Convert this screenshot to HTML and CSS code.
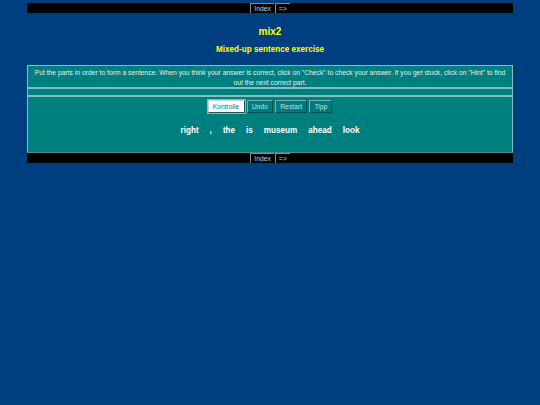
FILE: index.html
```html
<!DOCTYPE html>
<html lang="en">
<head>
    <meta charset="UTF-8">
    <title>mix2</title>
    <link rel="stylesheet" href="styles.css">
</head>
<body>
    <div class="nav-bar nav-top">
        <span class="nav-button">Index</span>
        <span class="nav-button">=&gt;</span>
    </div>
    <div class="title-block">
        <h2 class="exercise-title">mix2</h2>
        <h3 class="exercise-subtitle">Mixed-up sentence exercise</h3>
    </div>
    <div class="box instructions">Put the parts in order to form a sentence. When you think your answer is correct, click on "Check" to check your answer. If you get stuck, click on "Hint" to find out the next correct part.</div>
    <div class="box answer-line"></div>
    <div class="box main-box">
        <div class="buttons">
            <button class="ex-button focused">Kontrolle</button>
            <button class="ex-button">Undo</button>
            <button class="ex-button">Restart</button>
            <button class="ex-button">Tipp</button>
        </div>
        <div class="segments">
            <span class="segment">right</span>
            <span class="segment">,</span>
            <span class="segment">the</span>
            <span class="segment">is</span>
            <span class="segment">museum</span>
            <span class="segment">ahead</span>
            <span class="segment">look</span>
        </div>
    </div>
    <div class="nav-bar nav-bottom">
        <span class="nav-button">Index</span>
        <span class="nav-button">=&gt;</span>
    </div>
</body>
</html>
```

FILE: styles.css
```css
body {
    font-family: "Liberation Sans", Arial, sans-serif;
    margin: 0;
    padding: 3px 27px 0;
    background-color: #003f7f;
    color: #ffffff;
    font-size: 6.75px;
}
.nav-bar {
    height: 10px;
    background-color: #000000;
    display: flex;
    justify-content: center;
    gap: 1px;
    box-sizing: border-box;
    font-size: 6.75px;
    line-height: 10px;
}
.nav-button {
    color: #c0d0d0;
    padding: 0 3px;
    border-left: 1px solid #8a8a8a;
    border-top: 1px solid #8a8a8a;
    line-height: 9px;
}
.title-block {
    text-align: center;
    color: #ffff00;
}
.exercise-title {
    font-size: 10px;
    font-weight: bold;
    margin: 13px 0 0;
    line-height: 12px;
}
.exercise-subtitle {
    font-size: 8.15px;
    font-weight: bold;
    margin: 6px 0 0;
    line-height: 12px;
}
.box {
    background-color: #007f7f;
    border: 1px solid #7fbfbf;
    box-sizing: border-box;
}
.instructions {
    margin-top: 9px;
    height: 23px;
    padding: 2px 4px;
    text-align: center;
    line-height: 9.5px;
    color: #e0f0f0;
}
.answer-line {
    height: 8px;
}
.main-box {
    height: 57px;
    border-bottom-color: #3f8f8f;
}
.buttons {
    display: flex;
    justify-content: center;
    gap: 2px;
    padding-top: 3px;
}
.ex-button {
    font-family: inherit;
    font-size: 6.75px;
    height: 13px;
    padding: 0 4.2px;
    margin: 0;
    background-color: #007a7a;
    color: #c0e0e0;
    border: 1px solid;
    border-color: #6fb5b5 #004f4f #004f4f #6fb5b5;
    line-height: 10px;
}
.ex-button.focused {
    background-color: #ffffff;
    color: #007f7f;
    border-color: #c0d8d8 #305050 #305050 #c0d8d8;
    outline: 1px solid #7fbfbf;
}
.segments {
    display: flex;
    justify-content: center;
    gap: 11px;
    margin-top: 12px;
    font-size: 8.15px;
    font-weight: bold;
    line-height: 11px;
}
```
